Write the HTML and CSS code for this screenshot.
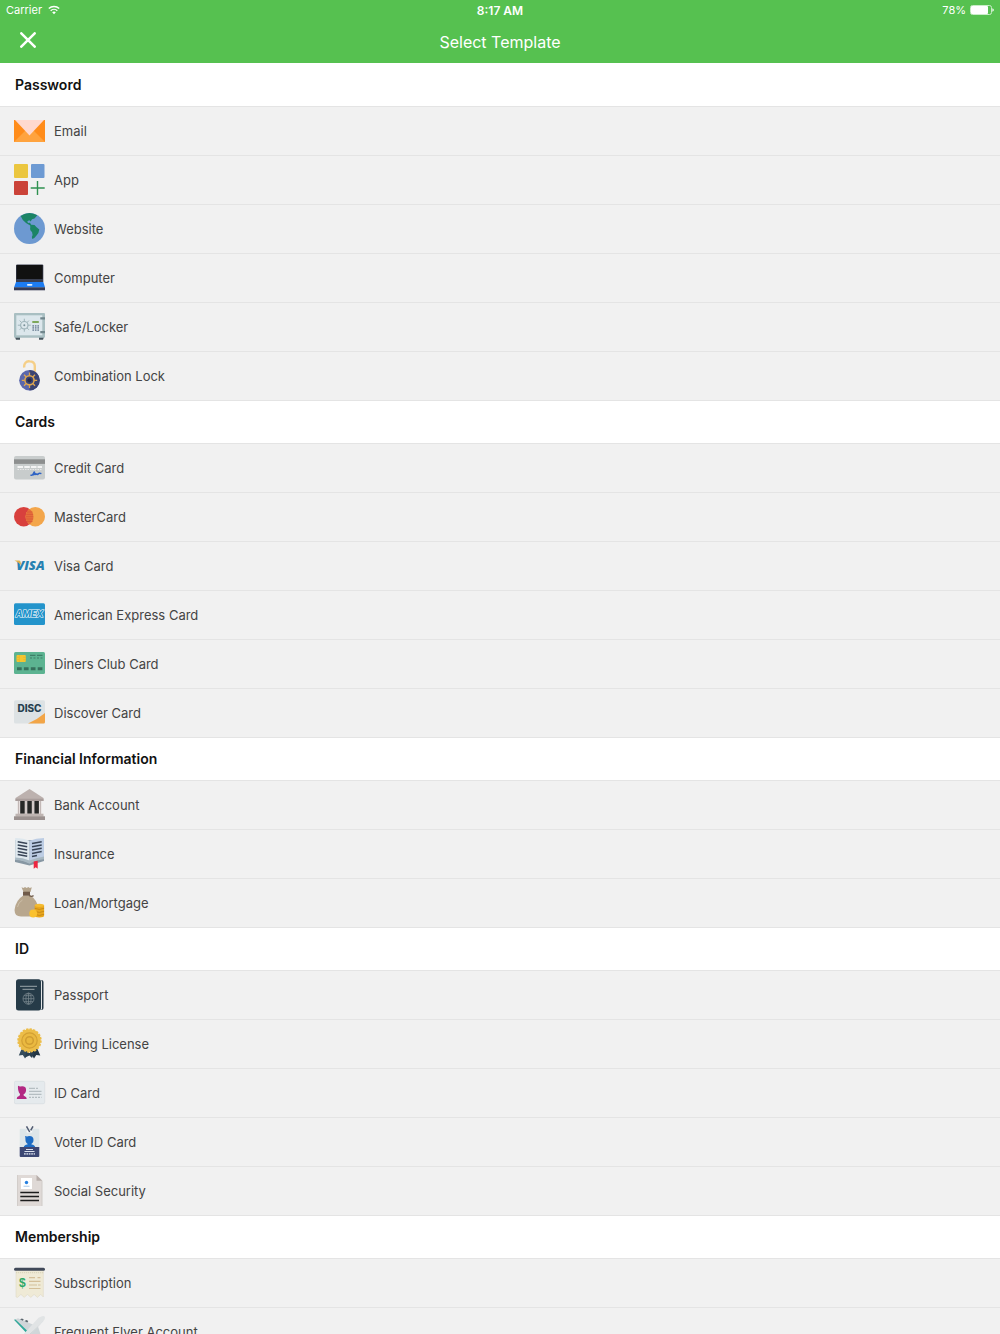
FILE: index.html
```html
<!DOCTYPE html>
<html lang="en">
<head>
    <meta charset="UTF-8">
    <meta name="viewport" content="width=device-width, initial-scale=1.0">
    <title>Select Template</title>
    <link rel="stylesheet" href="styles.css">
</head>
<body>
    <header class="top-bar">
        <div class="status-bar">
            <div class="carrier">
                <span>Carrier</span>
                <svg class="wifi" viewBox="0 0 12 10" aria-hidden="true">
                    <path d="M0.8 3.6a7.4 7.4 0 0 1 10.4 0M2.7 5.7a4.7 4.7 0 0 1 6.6 0" fill="none" stroke="#fff" stroke-width="1.4"/>
                    <path d="M4.2 7.3a2.6 2.6 0 0 1 3.6 0L6 9.2z" fill="#fff"/>
                </svg>
            </div>
            <div class="time">8:17 AM</div>
            <div class="battery">
                <span>78%</span>
                <svg class="battery-icon" viewBox="0 0 24 10" aria-hidden="true">
                    <rect x="0.5" y="0.5" width="21" height="9" rx="2" fill="none" stroke="#c9edc8"/>
                    <rect x="1" y="1" width="17" height="8" rx="1" fill="#fff"/>
                    <path d="M22.4 3.2q1.4 .6 1.4 1.8t-1.4 1.8z" fill="#fff"/>
                </svg>
            </div>
        </div>
        <div class="nav-bar">
            <button class="close-button" type="button" aria-label="Close">
                <svg viewBox="0 0 16 16" aria-hidden="true">
                    <path d="M1.3 1.3l13.4 13.4M14.7 1.3L1.3 14.7" stroke="#fff" stroke-width="2.5" stroke-linecap="round"/>
                </svg>
            </button>
            <h1 class="title">Select Template</h1>
        </div>
    </header>

    <main class="templates">
        <section>
            <h2 class="section-title">Password</h2>
            <ul class="template-list">
                <li><a class="template" href="#">
                    <svg class="icon" viewBox="0 0 32 32" aria-hidden="true">
                        <path d="M0 5h31v22H0z" fill="#ff8c1a"/>
                        <path d="M0 27l11-11h9l11 11z" fill="#ffa33e"/>
                        <path d="M1 5h29L15.5 20.5z" fill="#ffd9cf"/>
                    </svg>
                    <span>Email</span>
                </a></li>
                <li><a class="template" href="#">
                    <svg class="icon" viewBox="0 0 32 32" aria-hidden="true">
                        <rect x="0" y="0" width="14" height="14" rx="1" fill="#ebc63f"/>
                        <rect x="17" y="0" width="13.5" height="14" rx="1" fill="#6d9ad3"/>
                        <rect x="0" y="17" width="14" height="14" rx="1" fill="#cb4339"/>
                        <path d="M23.5 17v14M16.7 24h14" stroke="#2f9150" stroke-width="1.4"/>
                    </svg>
                    <span>App</span>
                </a></li>
                <li><a class="template" href="#">
                    <svg class="icon" viewBox="0 0 32 32" aria-hidden="true">
                        <circle cx="15.5" cy="15.5" r="15.5" fill="#6d99d1"/>
                        <path d="M6.7 3Q10 .4 15.5 0Q20 .4 23.3 2.3L20.5 5.5L18 6.3L16.7 8.5L15.3 7.2L13.3 8.3L14 10L16 9.7L17.2 11.8L20.5 12Q22 14 25.3 16.6Q25 20 22.7 22.3Q20.7 25.3 18.3 26Q17 24.5 18.6 22L18 19Q15.5 17.5 16.3 14.3L16.2 12.5L12 10Q8.3 7.5 6.7 3z" fill="#1b8465"/>
                    </svg>
                    <span>Website</span>
                </a></li>
                <li><a class="template" href="#">
                    <svg class="icon" viewBox="0 0 32 32" aria-hidden="true">
                        <path d="M2 20V3.5Q2 2.4 3.2 2.4H28.2Q29.3 2.4 29.3 3.5V20z" fill="#3a3f52"/>
                        <path d="M2.6 17V3h26v14z" fill="#111"/>
                        <path d="M2 20h27.3L31 25.5H0z" fill="#1d7cf2"/>
                        <path d="M0 25.3h31v3H0z" fill="#363b55"/>
                        <rect x="13" y="22" width="5.4" height="1.7" rx=".8" fill="#e4f0ff"/>
                    </svg>
                    <span>Computer</span>
                </a></li>
                <li><a class="template" href="#">
                    <svg class="icon" viewBox="0 0 32 32" aria-hidden="true">
                        <path d="M1 26h5v2.7H2zM25 26h5l-1 2.7h-4z" fill="#47555d"/>
                        <rect x="0" y="2" width="31" height="24.7" rx="1" fill="#a9bfc2"/>
                        <rect x="2.3" y="4.3" width="26" height="20" fill="#dce7ec"/>
                        <path d="M10.3 7.7v13M3.8 14.2h13M5.7 9.6l9.2 9.2M14.9 9.6l-9.2 9.2" stroke="#9fb4ba" stroke-width="1"/>
                        <circle cx="10.3" cy="14.2" r="3.7" fill="#dce7ec" stroke="#9fb4ba" stroke-width="1.2"/>
                        <circle cx="10.3" cy="14.2" r="1" fill="#7a9199"/>
                        <path d="M18.3 10h6.5v2h-6.5z" fill="#7da85a"/>
                        <path d="M19.2 14v6M21.7 14v6M24.2 14v6" stroke="#8193a5" stroke-width="1.6" stroke-dasharray="1.7 .4"/>
                        <path d="M26.3 6.3H31v2.2h-4.7zM26.3 20H31v2.2h-4.7z" fill="#71868c"/>
                    </svg>
                    <span>Safe/Locker</span>
                </a></li>
                <li><a class="template" href="#">
                    <svg class="icon" viewBox="0 0 32 32" aria-hidden="true">
                        <path d="M10.3 7.5C9.5 3.5 12.5 1 15.5 1.2C18.5 1.2 20.8 3 20.8 6V12" fill="none" stroke="#f5cf87" stroke-width="2.4"/>
                        <circle cx="15.5" cy="20.3" r="10.3" fill="#5a67ad"/>
                        <path d="M15.5 10a10.3 10.3 0 0 1 0 20.6z" fill="#3a4372"/>
                        <path d="M15.5 12.6v15.4M7.8 20.3h15.4M10 14.8l11 11M21 14.8l-11 11" stroke="#dda650" stroke-width="1.3"/>
                        <circle cx="15.5" cy="20.3" r="4.6" fill="#3a4372" stroke="#dda650" stroke-width="1.6"/>
                        <circle cx="15.5" cy="20.3" r="2.1" fill="#242a4c"/>
                    </svg>
                    <span>Combination Lock</span>
                </a></li>
            </ul>
        </section>

        <section>
            <h2 class="section-title">Cards</h2>
            <ul class="template-list">
                <li><a class="template" href="#">
                    <svg class="icon" viewBox="0 0 32 32" aria-hidden="true">
                        <rect x="0" y="4" width="31" height="23.5" rx="2" fill="#c8cccc"/>
                        <path d="M0 7.3h31v4.6H0z" fill="#8d8f8f"/>
                        <path d="M3.5 15h5.5M10.3 15h5.5M17 15h5.5M23.5 15h4.5" stroke="#f4f4f4" stroke-width="1.8"/>
                        <path d="M3.5 17.5h24.5" stroke="#e9e9e9" stroke-width="1" stroke-dasharray="1.5 1"/>
                        <path d="M16.500 23q2 .8 3-1.500t1-1q-3 2.700-1 2.300t2.300-1.500q-.6 2 1 .7q.7 1 1.600-.2t3-.2" fill="none" stroke="#2f63c4" stroke-width="1.5"/>
                    </svg>
                    <span>Credit Card</span>
                </a></li>
                <li><a class="template" href="#">
                    <svg class="icon" viewBox="0 0 32 32" aria-hidden="true">
                        <circle cx="9.7" cy="15.7" r="9.7" fill="#d8403d"/>
                        <circle cx="21.3" cy="15.7" r="9.7" fill="#f3a64b"/>
                        <path d="M15.5 7.9a9.7 9.7 0 0 1 0 15.6a9.7 9.7 0 0 1 0-15.6z" fill="#e5703b"/>
                        <path d="M13 11h5.5M12.3 13.4h6.8M12 15.7h7.2M12.3 18h6.8M13 20.4h5.5" stroke="#d95639" stroke-width=".8"/>
                    </svg>
                    <span>MasterCard</span>
                </a></li>
                <li><a class="template" href="#">
                    <svg class="icon" viewBox="0 0 32 32" aria-hidden="true">
                        <text class="visa" x="16.5" y="20.3" text-anchor="middle">VISA</text>
                        <path d="M.5 10.5h4.5q1.200 0 1.500 1.200l.8 3.500Q4.500 12 .5 10.500z" fill="#e3b24c"/>
                    </svg>
                    <span>Visa Card</span>
                </a></li>
                <li><a class="template" href="#">
                    <svg class="icon" viewBox="0 0 32 32" aria-hidden="true">
                        <rect x="0" y="4.3" width="31" height="21.7" rx="1.5" fill="#2394cb"/>
                        <text class="amex" x="15.5" y="18.2" text-anchor="middle">AMEX</text>
                    </svg>
                    <span>American Express Card</span>
                </a></li>
                <li><a class="template" href="#">
                    <svg class="icon" viewBox="0 0 32 32" aria-hidden="true">
                        <rect x="0" y="4" width="31" height="22" rx="1.5" fill="#5cb391"/>
                        <rect x="2.5" y="7" width="9.3" height="7" rx="1" fill="#f5c52f"/>
                        <path d="M5 9.3H2.5M5 11.7H2.5M9.3 9.3h2.5M9.3 11.7h2.5M5.3 7v7" stroke="#dfb02c" stroke-width=".6"/>
                        <path d="M16 7.3h5.5M23 7.3h5.5M16 10h2M19.5 10h2M23 10h2M26.5 10h2" stroke="#3f7f69" stroke-width="1.2"/>
                        <path d="M3 19.3h4.7v3H3zM9.9 19.3h4.7v3H9.9zM16.8 19.3h4.7v3h-4.7zM23.7 19.3h4.7v3h-4.7z" fill="#36705c"/>
                    </svg>
                    <span>Diners Club Card</span>
                </a></li>
                <li><a class="template" href="#">
                    <svg class="icon" viewBox="0 0 32 32" aria-hidden="true">
                        <rect x="0" y="3.3" width="31" height="23.3" rx="1.5" fill="#dde2e4"/>
                        <path d="M14 26.6Q24 22 31 16v9.1q0 1.5-1.5 1.5z" fill="#f2a547"/>
                        <text class="disc" x="15.5" y="15.3" text-anchor="middle">DISC</text>
                    </svg>
                    <span>Discover Card</span>
                </a></li>
            </ul>
        </section>

        <section>
            <h2 class="section-title">Financial Information</h2>
            <ul class="template-list">
                <li><a class="template" href="#">
                    <svg class="icon" viewBox="0 0 32 32" aria-hidden="true">
                        <path d="M15.5 0L29.5 9v3h-28V9z" fill="#bcb1ae"/>
                        <path d="M1.5 9.7h28v2.3h-28z" fill="#a99d9b"/>
                        <path d="M3.5 12h24v13h-24z" fill="#e4dcdb"/>
                        <path d="M6.2 12h4.5v12.7H6.2zM13.3 12h4.5v12.7h-4.5zM20.4 12h4.5v12.7h-4.5z" fill="#262726"/>
                        <path d="M4.5 12v13M12 12v13M19 12v13M26.5 12v13" stroke="#b9aeac" stroke-width=".8"/>
                        <path d="M1.5 24.7h28v3h-28z" fill="#beb4b1"/>
                        <path d="M0 27.3h31V31H0z" fill="#9b918f"/>
                    </svg>
                    <span>Bank Account</span>
                </a></li>
                <li><a class="template" href="#">
                    <svg class="icon" viewBox="0 0 32 32" aria-hidden="true">
                        <path d="M1 2v22l14.5 3.5L30 23V2z" fill="#8797a3"/>
                        <path d="M1.2 0Q10 .3 15.5 2.7V25Q9 21.7 1.2 21.5z" fill="#dfe8ee"/>
                        <path d="M30 0Q22 .3 15.5 2.7V25Q22 21.5 30 20.3z" fill="#bdcde4"/>
                        <path d="M1.2 19.5Q9 19.7 15.5 22.5Q22 20 30 18.5v2.8Q22 22 15.5 25.7Q9 22.3 1.2 22z" fill="#a8b8c2"/>
                        <path d="M3.7 3.7l9.5 1.8M3.7 7l9.5 1.8M3.7 10.3l9.5 1.8M3.7 13.6l9.5 1.8M3.7 16.5l9.5 1.8M18 5.5l9.7-1.8M18 8.8L27.7 7M18 12.1l9.7-1.8M18 15.4l9.7-1.8M18 18.5l5-1" stroke="#384456" stroke-width="1.5"/>
                        <path d="M19.7 23.5l4-.8v8l-2-1.5l-2 1.5z" fill="#ed2540"/>
                    </svg>
                    <span>Insurance</span>
                </a></li>
                <li><a class="template" href="#">
                    <svg class="icon" viewBox="0 0 32 32" aria-hidden="true">
                        <path d="M7.5 .3l2 .7l1.5-1l1.7 1l1.6-1l1.5 1l2-.7L16.5 5h-7z" fill="#b4a48c"/>
                        <path d="M9.3 8.5h7.2Q23 13 24.5 21q.8 8.4-6.5 8.4H7Q-.2 29.4 .7 22Q2 13 9.3 8.5z" fill="#b8a78e"/>
                        <path d="M9 4.7h7v4H9z" fill="#705b4a"/>
                        <path d="M15 8.5q3 1.7 4.5 0" fill="none" stroke="#705b4a" stroke-width="1.3"/>
                        <path d="M3.5 20q1-5 5-7" fill="none" stroke="#cdbfa9" stroke-width="1"/>
                        <path d="M20.7 18.3v10.5a4.7 1.7 0 0 0 9.4 0V18.3z" fill="#e9a71d"/>
                        <ellipse cx="25.4" cy="18.3" rx="4.7" ry="1.6" fill="#f4bb30"/>
                        <path d="M20.7 21.3q4.7 2.3 9.4 0M20.7 24.3q4.7 2.3 9.4 0M20.7 27.3q4.7 2.3 9.4 0" fill="none" stroke="#bf8414" stroke-width=".8"/>
                        <circle cx="19.2" cy="26.5" r="3.9" fill="#fac12e"/>
                    </svg>
                    <span>Loan/Mortgage</span>
                </a></li>
            </ul>
        </section>

        <section>
            <h2 class="section-title">ID</h2>
            <ul class="template-list">
                <li><a class="template" href="#">
                    <svg class="icon" viewBox="0 0 32 32" aria-hidden="true">
                        <rect x="6" y="1" width="23.5" height="30" rx="2" fill="#253745"/>
                        <rect x="5" y=".7" width="23" height="30.5" rx="2" fill="#e4e7e8"/>
                        <rect x="2" y=".3" width="25" height="31.3" rx="2.5" fill="#263b48"/>
                        <path d="M6 7.3h17M8.5 10.3h12" stroke="#839096" stroke-width="1.2"/>
                        <g fill="none" stroke="#76848b" stroke-width=".8">
                            <circle cx="14.5" cy="19.7" r="5.5"/>
                            <ellipse cx="14.5" cy="19.7" rx="2.6" ry="5.5"/>
                            <path d="M9 19.7h11M14.5 14.2v11M10 16.7h9M10 22.7h9"/>
                        </g>
                    </svg>
                    <span>Passport</span>
                </a></li>
                <li><a class="template" href="#">
                    <svg class="icon" viewBox="0 0 32 32" aria-hidden="true">
                        <path d="M8 20L4.8 27.5l4-.6l2.2 3.7l4.5-7z" fill="#354c5c"/>
                        <path d="M23 20l3.3 7.5l-4-.6l-2.3 3.7l-4.5-7z" fill="#243746"/>
                        <path d="M12 25l-1 4.5l4.5-2l2.5 2.5l2-5z" fill="#2b4050"/>
                        <circle cx="15.5" cy="12.5" r="11.2" fill="#ecbd48"/>
                        <circle cx="15.5" cy="12.5" r="11.2" fill="none" stroke="#ecbd48" stroke-width="2" stroke-dasharray="2.3 1.2"/>
                        <circle cx="15.5" cy="12.5" r="7.7" fill="#eab940" stroke="#d3a033" stroke-width="1.2"/>
                        <circle cx="15.5" cy="12.5" r="3.8" fill="#e9b83f" stroke="#d09d31" stroke-width="1.5"/>
                    </svg>
                    <span>Driving License</span>
                </a></li>
                <li><a class="template" href="#">
                    <svg class="icon" viewBox="0 0 32 32" aria-hidden="true">
                        <rect x=".3" y="4.3" width="30.4" height="22.4" rx="1.5" fill="#e5eaed" stroke="#d3dade" stroke-width=".6"/>
                        <path d="M4 8.700l2 .8q5.500-1.200 6 2.500t-2.500 5.500q0 1.600 1.200 1.800Q12.700 20 12.700 22H2.700q0-2.300 2.300-2.900Q6.300 18.700 6 17Q3.500 14 4 8.700z" fill="#b32883"/>
                        <path d="M15 11.3h6M22 11.3h2M15 14.3h12.500M15 17.3h12.500" stroke="#a9b3b7" stroke-width="1"/>
                        <path d="M15 20.3h12.5" stroke="#b3bcc0" stroke-width="1.2" stroke-dasharray="2 1"/>
                    </svg>
                    <span>ID Card</span>
                </a></li>
                <li><a class="template" href="#">
                    <svg class="icon" viewBox="0 0 32 32" aria-hidden="true">
                        <rect x="5.7" y="2.7" width="19.6" height="19" rx="1" fill="#dde6e9"/>
                        <path d="M12.7 4.500h5.500v2h-5.500z" fill="#f9fbfb"/>
                        <path d="M12.500 .3l3.200 5.700M19 .3l-2.300 4" stroke="#525c72" stroke-width="1.5"/>
                        <circle cx="15.5" cy="14" r="4" fill="#1c6cc4"/>
                        <path d="M11 10l2 .5l-1 4M13.5 16h4v2.5q3.5 .3 3.7 3H9.7q.3-2.7 3.8-3z" fill="#1c6cc4"/>
                        <path d="M5.7 21h19.6v9q0 1-1 1H6.7q-1 0-1-1z" fill="#3c4773"/>
                        <path d="M12 23.5h7M10.5 25.5h10" stroke="#dce2ed" stroke-width="1.2"/>
                        <path d="M10 27.9h11" stroke="#b7bfd2" stroke-width="1.8" stroke-dasharray="1.7 .7"/>
                    </svg>
                    <span>Voter ID Card</span>
                </a></li>
                <li><a class="template" href="#">
                    <svg class="icon" viewBox="0 0 32 32" aria-hidden="true">
                        <path d="M3.2 0H22.5l5.8 5.8V31H3.2z" fill="#dfd9d6"/>
                        <path d="M3.5 0v31M28 6v25" stroke="#c8c2c0" stroke-width=".6"/>
                        <path d="M22.5 0l5.8 5.8h-5.8z" fill="#b7aeaa"/>
                        <path d="M7 3h11v11H7z" fill="#fff"/>
                        <circle cx="12.5" cy="7.5" r="1.7" fill="#2680e0"/>
                        <path d="M9.5 11.3h6" stroke="#bdd5ec" stroke-width="1.3"/>
                        <path d="M6.3 17.5H25M6.3 21.5H25M6.3 25.5H25" stroke="#1d1d1d" stroke-width="1.6"/>
                    </svg>
                    <span>Social Security</span>
                </a></li>
            </ul>
        </section>

        <section>
            <h2 class="section-title">Membership</h2>
            <ul class="template-list">
                <li><a class="template" href="#">
                    <svg class="icon" viewBox="0 0 32 32" aria-hidden="true">
                        <path d="M2 2h27.3v28l-2.600-2.600l-3.300 3l-3.300-3l-3.300 3l-3.300-3l-3.300 3l-3.300-3l-3.300 3L2 30z" fill="#efead6" stroke="#dbd5c0" stroke-width=".5"/>
                        <rect x="0" y=".7" width="31" height="3" rx="1.5" fill="#414959"/>
                        <path d="M2 5.7h27.3" stroke="#d1caaf" stroke-width=".8" stroke-dasharray="1.2 .8"/>
                        <text class="dollar" x="8.3" y="19.8" text-anchor="middle">$</text>
                        <path d="M15 10.7h6M23.5 10.7h3M15 14.3h11.500M15 18h8M24 18h2.500M15 21.5h11.500" stroke="#d4bf99" stroke-width="1.2"/>
                    </svg>
                    <span>Subscription</span>
                </a></li>
                <li><a class="template" href="#">
                    <svg class="icon" viewBox="0 0 32 32" aria-hidden="true">
                        <path d="M0 4L4 2.300L20 9l-7 8z" fill="#d0d6d9"/>
                        <path d="M0 3.800l1.500-.2L13.500 15l-1.500 1.500z" fill="#2fa99a"/>
                        <path d="M6 3.200l2-.8l1.800 1l-1 1.300zM10.5 4.900l2-.8l1.800 1l-1 1.300z" fill="#59656d"/>
                        <path d="M24.5 1.800Q29 -.6 30.5 .4Q32 2 29 5.800L10 25L3 30l4-9z" fill="#e1e4e5"/>
                        <path d="M30 4.500L10 25L3 30L26 8.500z" fill="#c5cbce"/>
                        <path d="M24 10.500l5 15l-2.500 2.300L16.500 18z" fill="#d0d6d9"/>
                    </svg>
                    <span>Frequent Flyer Account</span>
                </a></li>
            </ul>
        </section>
    </main>
</body>
</html>
```

FILE: styles.css
```css
body {
    margin: 0;
    height: 100vh;
    display: flex;
    flex-direction: column;
    overflow: hidden;
    font-family: Inter, "Liberation Sans", sans-serif;
    background-color: #fff;
}

.top-bar {
    flex: none;
    background-color: #56c150;
    color: #fff;
}

.status-bar {
    display: grid;
    grid-template-columns: 1fr auto 1fr;
    align-items: center;
    height: 20px;
    padding: 0 6px;
    font-size: 11px;
}

.carrier,
.battery {
    display: flex;
    align-items: center;
    gap: 4px;
}

.carrier {
    gap: 6px;
}

.battery {
    justify-content: flex-end;
}

.time {
    font-size: 12px;
    font-weight: 600;
}

.wifi {
    width: 12px;
    height: 10px;
}

.battery-icon {
    width: 24px;
    height: 10px;
}

.nav-bar {
    display: grid;
    grid-template-columns: 1fr auto 1fr;
    align-items: center;
    height: 43px;
    padding: 0 12px;
}

.close-button {
    justify-self: start;
    display: flex;
    padding: 8px 8px 12px;
    border: none;
    background: none;
    cursor: pointer;
}

.close-button svg {
    width: 16px;
    height: 16px;
}

.title {
    margin: 0;
    font-size: 16px;
    font-weight: 400;
}

/* the list scrolls under the fixed header */
.templates {
    flex: 1;
    min-height: 0;
    overflow-y: auto;
    scrollbar-width: none;
}

.section-title {
    margin: 0;
    padding-left: 15px;
    font-size: 14px;
    font-weight: 600;
    line-height: 43px;
    color: #111;
}

section + section .section-title {
    border-top: 1px solid #e4e4e4;
    line-height: 42px;
}

.template-list {
    margin: 0;
    padding: 0;
    list-style: none;
    background-color: #f1f1f1;
}

.template {
    display: flex;
    align-items: center;
    gap: 8px;
    height: 48px;
    padding-left: 14px;
    border-top: 1px solid #e4e4e4;
    font-size: 13px;
    color: #444;
    text-decoration: none;
}

.icon {
    flex: none;
    width: 32px;
    height: 32px;
}

.visa {
    font: italic 800 13px "Open Sans", sans-serif;
    fill: #2781b2;
}

.amex {
    font: italic 800 9px Inter, sans-serif;
    fill: #2394cb;
    stroke: #fff;
    stroke-width: 1px;
    paint-order: stroke;
}

.disc {
    font: 800 10px Inter, sans-serif;
    fill: #26404f;
}

.dollar {
    font: bold 12px "Liberation Sans", sans-serif;
    fill: #2fa866;
}
```
